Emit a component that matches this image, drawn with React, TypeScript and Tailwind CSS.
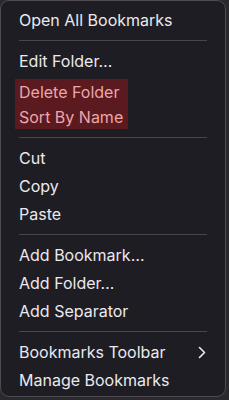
import React from "react";

const Row = ({ label, chevron }: { label: string; chevron?: boolean }) => (
  <div className="flex h-[28px] items-center justify-between pl-[18px] pr-[18px]">
    <span>{label}</span>
    {chevron && (
      <svg width="8" height="13" viewBox="0 0 8 13" fill="none" className="mr-[1px]">
        <path d="M1.5 1.5 L6.5 6.5 L1.5 11.5" stroke="#ebe9ee" strokeWidth="1.6" strokeLinecap="round" strokeLinejoin="round" />
      </svg>
    )}
  </div>
);

const Sep = () => (
  <div className="py-[6px] pl-[18px] pr-[18px]">
    <div className="h-px bg-[#48464c]" />
  </div>
);

export default function App() {
  return (
    <div className="h-[400px] w-[229px] bg-[#2a292d]">
      <div
        className="h-[397px] w-[226px] rounded-[9px] border border-[#4d4b51] bg-[#1e1d23] pt-[5px] text-[16px] text-[#ebe9ee]"
        style={{ fontFamily: "Inter, 'Noto Sans', sans-serif" }}
      >
        <Row label="Open All Bookmarks" />
        <Sep />
        <Row label="Edit Folder…" />
        <div className="h-[56px] pl-[14px] pt-[4px]">
          <div className="w-fit bg-[#5b1a1f] pl-[4px] pr-[5px] text-[#eca7aa]">
            <div className="flex h-[25px] items-center">Delete Folder</div>
            <div className="flex h-[25px] items-center">Sort By Name</div>
          </div>
        </div>
        <Sep />
        <Row label="Cut" />
        <Row label="Copy" />
        <Row label="Paste" />
        <Sep />
        <Row label="Add Bookmark…" />
        <Row label="Add Folder…" />
        <Row label="Add Separator" />
        <Sep />
        <Row label="Bookmarks Toolbar" chevron />
        <Row label="Manage Bookmarks" />
      </div>
    </div>
  );
}
